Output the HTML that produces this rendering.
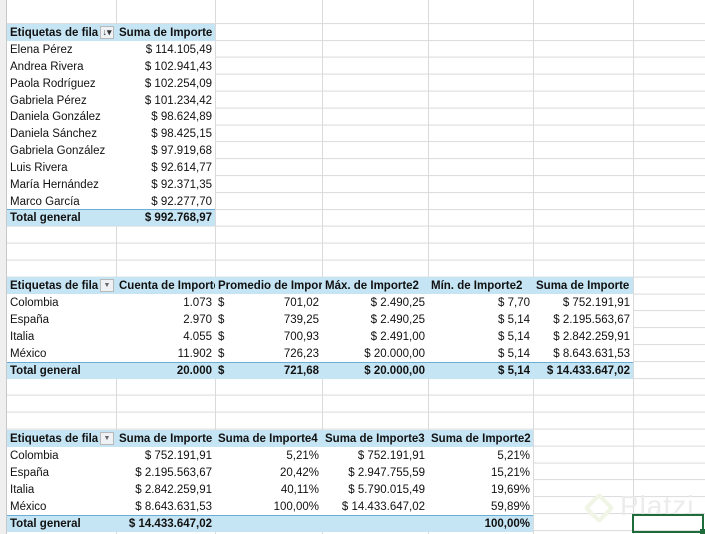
<!DOCTYPE html>
<html><head><meta charset="utf-8"><style>
*{margin:0;padding:0;box-sizing:border-box}
body{width:705px;height:534px;overflow:hidden;background:#fff;position:relative;font-family:"Liberation Sans",sans-serif;font-size:11.5px;color:#111}
.grid{position:absolute;left:7px;top:0;width:698px;height:534px;
background-image:repeating-linear-gradient(to bottom,transparent 0,transparent 15.9px,#dadada 15.9px,#dadada 16.9px);background-position:0 7.1px}
.v{position:absolute;top:0;width:1px;height:534px;background:#dadada}
.strip{position:absolute;left:0;top:0;width:7px;height:534px;background:#efefef;border-right:1px solid #c8c8c8}
.r{position:absolute;left:7px;height:17px;line-height:18px;white-space:nowrap}
.c{position:absolute;top:0;height:17px;overflow:hidden;padding:0 3px}
.rt{text-align:right}
.h{background:#c6e5f4;font-weight:bold}
.t{background:#c6e5f4;font-weight:bold;border-top:1px solid #6aaed6;line-height:17px}
.w{background:#fff}
.dd{position:absolute;top:2px;width:14px;height:13px;border:1px solid #b8b8b8;background:#eef2f5;font-size:7px;line-height:11px;text-align:center;color:#666;font-weight:normal}
</style></head><body>
<div class="grid"></div>
<div class="v" style="left:116px"></div><div class="v" style="left:215px"></div><div class="v" style="left:322px"></div><div class="v" style="left:428px"></div><div class="v" style="left:533px"></div><div class="v" style="left:633px"></div>
<div class="strip"></div>

<!-- Table 1 -->
<div class="r h" style="top:24px;width:208px"><div class="c" style="left:0;width:109px">Etiquetas de fila</div><div class="dd" style="left:93px;font-size:9px;color:#333;font-weight:bold">↓▾</div><div class="c" style="left:109px;width:99px">Suma de Importe</div></div>
<div class="r w" style="top:41px;width:208px"><div class="c" style="left:0;width:109px">Elena Pérez</div><div class="c rt" style="left:109px;width:99px">$ 114.105,49</div></div>
<div class="r w" style="top:58px;width:208px"><div class="c" style="left:0;width:109px">Andrea Rivera</div><div class="c rt" style="left:109px;width:99px">$ 102.941,43</div></div>
<div class="r w" style="top:75px;width:208px"><div class="c" style="left:0;width:109px">Paola Rodríguez</div><div class="c rt" style="left:109px;width:99px">$ 102.254,09</div></div>
<div class="r w" style="top:92px;width:208px"><div class="c" style="left:0;width:109px">Gabriela Pérez</div><div class="c rt" style="left:109px;width:99px">$ 101.234,42</div></div>
<div class="r w" style="top:108px;width:208px"><div class="c" style="left:0;width:109px">Daniela González</div><div class="c rt" style="left:109px;width:99px">$ 98.624,89</div></div>
<div class="r w" style="top:125px;width:208px"><div class="c" style="left:0;width:109px">Daniela Sánchez</div><div class="c rt" style="left:109px;width:99px">$ 98.425,15</div></div>
<div class="r w" style="top:142px;width:208px"><div class="c" style="left:0;width:109px">Gabriela González</div><div class="c rt" style="left:109px;width:99px">$ 97.919,68</div></div>
<div class="r w" style="top:159px;width:208px"><div class="c" style="left:0;width:109px">Luis Rivera</div><div class="c rt" style="left:109px;width:99px">$ 92.614,77</div></div>
<div class="r w" style="top:176px;width:208px"><div class="c" style="left:0;width:109px">María Hernández</div><div class="c rt" style="left:109px;width:99px">$ 92.371,35</div></div>
<div class="r w" style="top:193px;width:208px"><div class="c" style="left:0;width:109px">Marco García</div><div class="c rt" style="left:109px;width:99px">$ 92.277,70</div></div>
<div class="r t" style="top:209px;width:208px"><div class="c" style="left:0;width:109px">Total general</div><div class="c rt" style="left:109px;width:99px">$ 992.768,97</div></div>

<!-- Table 2 -->
<div class="r h" style="top:277px;width:626px"><div class="c" style="left:0;width:109px">Etiquetas de fila</div><div class="dd" style="left:93px">▼</div><div class="c" style="left:109px;width:99px;padding-right:0">Cuenta de Importe</div><div class="c" style="left:208px;width:107px;padding-right:0">Promedio de Importe</div><div class="c" style="left:315px;width:106px">Máx. de Importe2</div><div class="c" style="left:421px;width:105px">Mín. de Importe2</div><div class="c" style="left:526px;width:100px">Suma de Importe</div></div>
<div class="r w" style="top:294px;width:626px"><div class="c" style="left:0;width:109px">Colombia</div><div class="c rt" style="left:109px;width:99px">1.073</div><div class="c" style="left:208px;width:107px">$</div><div class="c rt" style="left:208px;width:107px">701,02</div><div class="c rt" style="left:315px;width:106px">$ 2.490,25</div><div class="c rt" style="left:421px;width:105px">$ 7,70</div><div class="c rt" style="left:526px;width:100px">$ 752.191,91</div></div>
<div class="r w" style="top:311px;width:626px"><div class="c" style="left:0;width:109px">España</div><div class="c rt" style="left:109px;width:99px">2.970</div><div class="c" style="left:208px;width:107px">$</div><div class="c rt" style="left:208px;width:107px">739,25</div><div class="c rt" style="left:315px;width:106px">$ 2.490,25</div><div class="c rt" style="left:421px;width:105px">$ 5,14</div><div class="c rt" style="left:526px;width:100px">$ 2.195.563,67</div></div>
<div class="r w" style="top:328px;width:626px"><div class="c" style="left:0;width:109px">Italia</div><div class="c rt" style="left:109px;width:99px">4.055</div><div class="c" style="left:208px;width:107px">$</div><div class="c rt" style="left:208px;width:107px">700,93</div><div class="c rt" style="left:315px;width:106px">$ 2.491,00</div><div class="c rt" style="left:421px;width:105px">$ 5,14</div><div class="c rt" style="left:526px;width:100px">$ 2.842.259,91</div></div>
<div class="r w" style="top:345px;width:626px"><div class="c" style="left:0;width:109px">México</div><div class="c rt" style="left:109px;width:99px">11.902</div><div class="c" style="left:208px;width:107px">$</div><div class="c rt" style="left:208px;width:107px">726,23</div><div class="c rt" style="left:315px;width:106px">$ 20.000,00</div><div class="c rt" style="left:421px;width:105px">$ 5,14</div><div class="c rt" style="left:526px;width:100px">$ 8.643.631,53</div></div>
<div class="r t" style="top:362px;width:626px"><div class="c" style="left:0;width:109px">Total general</div><div class="c rt" style="left:109px;width:99px">20.000</div><div class="c" style="left:208px;width:107px">$</div><div class="c rt" style="left:208px;width:107px">721,68</div><div class="c rt" style="left:315px;width:106px">$ 20.000,00</div><div class="c rt" style="left:421px;width:105px">$ 5,14</div><div class="c rt" style="left:526px;width:100px">$ 14.433.647,02</div></div>

<!-- Table 3 -->
<div class="r h" style="top:430px;width:526px"><div class="c" style="left:0;width:109px">Etiquetas de fila</div><div class="dd" style="left:93px">▼</div><div class="c" style="left:109px;width:99px">Suma de Importe</div><div class="c" style="left:208px;width:107px">Suma de Importe4</div><div class="c" style="left:315px;width:106px">Suma de Importe3</div><div class="c" style="left:421px;width:105px">Suma de Importe2</div></div>
<div class="r w" style="top:447px;width:526px"><div class="c" style="left:0;width:109px">Colombia</div><div class="c rt" style="left:109px;width:99px">$ 752.191,91</div><div class="c rt" style="left:208px;width:107px">5,21%</div><div class="c rt" style="left:315px;width:106px">$ 752.191,91</div><div class="c rt" style="left:421px;width:105px">5,21%</div></div>
<div class="r w" style="top:464px;width:526px"><div class="c" style="left:0;width:109px">España</div><div class="c rt" style="left:109px;width:99px">$ 2.195.563,67</div><div class="c rt" style="left:208px;width:107px">20,42%</div><div class="c rt" style="left:315px;width:106px">$ 2.947.755,59</div><div class="c rt" style="left:421px;width:105px">15,21%</div></div>
<div class="r w" style="top:481px;width:526px"><div class="c" style="left:0;width:109px">Italia</div><div class="c rt" style="left:109px;width:99px">$ 2.842.259,91</div><div class="c rt" style="left:208px;width:107px">40,11%</div><div class="c rt" style="left:315px;width:106px">$ 5.790.015,49</div><div class="c rt" style="left:421px;width:105px">19,69%</div></div>
<div class="r w" style="top:498px;width:526px"><div class="c" style="left:0;width:109px">México</div><div class="c rt" style="left:109px;width:99px">$ 8.643.631,53</div><div class="c rt" style="left:208px;width:107px">100,00%</div><div class="c rt" style="left:315px;width:106px">$ 14.433.647,02</div><div class="c rt" style="left:421px;width:105px">59,89%</div></div>
<div class="r t" style="top:515px;width:526px"><div class="c" style="left:0;width:109px">Total general</div><div class="c rt" style="left:109px;width:99px">$ 14.433.647,02</div><div class="c rt" style="left:421px;width:105px">100,00%</div></div>

<!-- watermark -->
<div style="position:absolute;left:588px;top:497px;width:22px;height:22px;border:4px solid #f1f5e6;transform:rotate(45deg);border-radius:3px"></div>
<div style="position:absolute;left:620px;top:490px;font-size:28px;color:#ececec;letter-spacing:1px">Platzi</div>
<!-- selected cell -->
<div style="position:absolute;left:632px;top:514px;width:72px;height:19px;border:2px solid #1e6b3c"></div>
<div style="position:absolute;left:700px;top:529px;width:5px;height:5px;background:#1e6b3c"></div>
</body></html>
